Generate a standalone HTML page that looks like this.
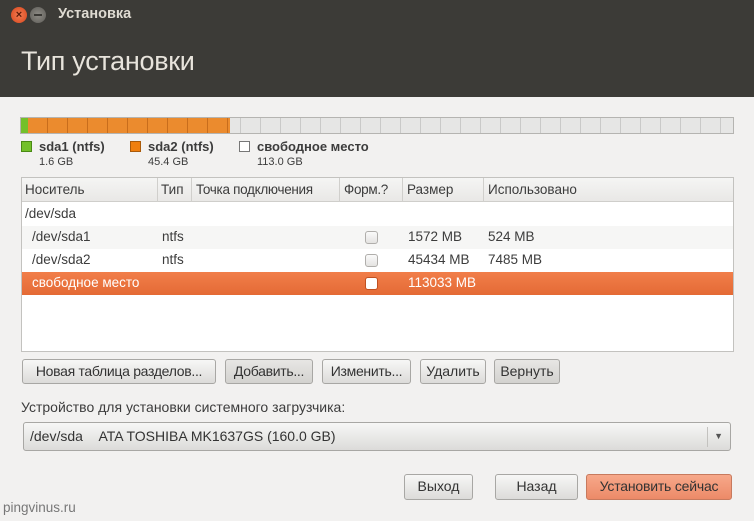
<!DOCTYPE html><html><head><meta charset="utf-8"><style>
*{margin:0;padding:0;box-sizing:border-box}
body{width:754px;height:521px;background:#f2f1f0;font-family:"Liberation Sans","DejaVu Sans",sans-serif;font-size:13.5px;color:#3c3c3c;position:relative;overflow:hidden}
.a{position:absolute;white-space:nowrap}
.hd{left:0;top:0;width:754px;height:97px;background:#3c3b37}
.btn{position:absolute;height:25px;border:1px solid #a8a7a4;border-radius:3px;background:linear-gradient(#f7f7f6,#dcdbd9);text-align:center;line-height:23px;font-size:14px;color:#333}
.c{letter-spacing:0}
.cb{position:absolute;width:13px;height:13px;border:1px solid #b0aeab;border-radius:3px;background:linear-gradient(#fafafa,#e4e3e1);left:365px}
</style></head><body>
<div class="a hd"></div>
<div class="a" style="left:11px;top:7px;width:16px;height:16px;border-radius:50%;background:radial-gradient(#f37c52,#d8461c);color:#5a1a08;font-size:11px;text-align:center;line-height:16px;font-weight:bold">×</div>
<div class="a" style="left:30px;top:7px;width:16px;height:16px;border-radius:50%;background:radial-gradient(#8e8c86,#5e5c57);"><div style="position:absolute;left:4px;top:7px;width:8px;height:2px;background:#3a3935"></div></div>
<div class="a" style="left:58px;top:6px;color:#dfdbd2;font-weight:bold;font-size:14.5px">Установка</div>
<div class="a" style="left:21px;top:46px;color:#e8e4dc;font-size:27px;letter-spacing:-0.3px">Тип установки</div>

<div class="a" style="left:20px;top:117px;width:714px;height:17px;border:1px solid #b5b4b1;background:repeating-linear-gradient(90deg,#e6e6e5 0 19px,#c9c9c8 19px 20px)"></div>
<div class="a" style="left:21px;top:118px;width:7px;height:15px;background:#73c02a"></div>
<div class="a" style="left:28px;top:118px;width:202px;height:15px;background:repeating-linear-gradient(90deg,#eb8b2e 0 19px,#c86d1c 19px 20px)"></div>

<div class="a" style="left:21px;top:141px;width:11px;height:11px;background:#73c02a;border:1px solid #4a8a14"></div>
<div class="a" style="left:39px;top:139px;font-weight:bold;font-size:13px">sda1 (ntfs)</div>
<div class="a" style="left:39px;top:156px;font-size:11px">1.6 GB</div>
<div class="a" style="left:130px;top:141px;width:11px;height:11px;background:#f07f0e;border:1px solid #a95a0a"></div>
<div class="a" style="left:148px;top:139px;font-weight:bold;font-size:13px">sda2 (ntfs)</div>
<div class="a" style="left:148px;top:156px;font-size:11px">45.4 GB</div>
<div class="a" style="left:239px;top:141px;width:11px;height:11px;background:#fff;border:1px solid #777"></div>
<div class="a" style="left:257px;top:139px;font-weight:bold;font-size:13px">свободное место</div>
<div class="a" style="left:257px;top:156px;font-size:11px">113.0 GB</div>

<div class="a" style="left:21px;top:177px;width:713px;height:175px;background:#fff;border:1px solid #c3c2bf"></div>
<div class="a" style="left:22px;top:178px;width:711px;height:24px;background:linear-gradient(#f5f5f4,#e9e8e6);border-bottom:1px solid #cfcecb"></div>
<div class="a" style="left:157px;top:178px;width:1px;height:24px;background:#d0cfcc"></div>
<div class="a" style="left:191px;top:178px;width:1px;height:24px;background:#d0cfcc"></div>
<div class="a" style="left:339px;top:178px;width:1px;height:24px;background:#d0cfcc"></div>
<div class="a" style="left:402px;top:178px;width:1px;height:24px;background:#d0cfcc"></div>
<div class="a" style="left:483px;top:178px;width:1px;height:24px;background:#d0cfcc"></div>
<div class="a c" style="left:25px;top:182px">Носитель</div>
<div class="a c" style="left:161px;top:182px">Тип</div>
<div class="a c" style="left:196px;top:182px;letter-spacing:-0.3px">Точка подключения</div>
<div class="a c" style="left:344px;top:182px;letter-spacing:-0.3px">Форм.?</div>
<div class="a c" style="left:407px;top:182px">Размер</div>
<div class="a c" style="left:488px;top:182px">Использовано</div>
<div class="a c" style="left:25px;top:206px">/dev/sda</div>
<div class="a" style="left:22px;top:226px;width:711px;height:23px;background:#f6f6f5"></div>
<div class="a c" style="left:32px;top:229px">/dev/sda1</div><div class="a c" style="left:162px;top:229px">ntfs</div>
<div class="cb" style="top:231px"></div>
<div class="a c" style="left:408px;top:229px">1572 MB</div><div class="a c" style="left:488px;top:229px">524 MB</div>
<div class="a c" style="left:32px;top:252px">/dev/sda2</div><div class="a c" style="left:162px;top:252px">ntfs</div>
<div class="cb" style="top:254px"></div>
<div class="a c" style="left:408px;top:252px">45434 MB</div><div class="a c" style="left:488px;top:252px">7485 MB</div>
<div class="a" style="left:22px;top:272px;width:711px;height:23px;background:linear-gradient(#f17e4a,#e46a35)"></div>
<div class="a c" style="left:32px;top:275px;color:#fff">свободное место</div>
<div class="cb" style="top:277px;background:#fff;border-color:#c05020"></div>
<div class="a c" style="left:408px;top:275px;color:#fff">113033 MB</div>

<div class="btn" style="left:22px;top:359px;width:194px;letter-spacing:-0.3px">Новая таблица разделов...</div>
<div class="btn" style="left:225px;top:359px;width:88px;background:linear-gradient(#e7e6e4,#d3d2cf);letter-spacing:-0.3px">Добавить...</div>
<div class="btn" style="left:322px;top:359px;width:89px;letter-spacing:-0.3px">Изменить...</div>
<div class="btn" style="left:420px;top:359px;width:66px">Удалить</div>
<div class="btn" style="left:494px;top:359px;width:66px;background:linear-gradient(#e7e6e4,#d3d2cf)">Вернуть</div>

<div class="a c" style="left:21px;top:399px;font-size:14px">Устройство для установки системного загрузчика:</div>
<div class="btn" style="left:23px;top:422px;width:708px;height:29px;text-align:left;line-height:27px;padding-left:6px">/dev/sda&nbsp;&nbsp;&nbsp;&nbsp;ATA TOSHIBA MK1637GS (160.0 GB)
<div style="position:absolute;right:22px;top:4px;width:1px;height:20px;background:#c3c2bf"></div>
<div style="position:absolute;right:7px;top:0;font-size:9px;color:#555">▼</div></div>

<div class="btn" style="left:404px;top:474px;width:69px;height:26px">Выход</div>
<div class="btn" style="left:495px;top:474px;width:83px;height:26px">Назад</div>
<div class="btn" style="left:586px;top:474px;width:146px;height:26px;background:linear-gradient(#f7a88a,#ec8a68);border-color:#c77a5e;letter-spacing:-0.2px">Установить сейчас</div>
<div class="a" style="left:3px;top:500px;font-size:13.5px;color:#777">pingvinus.ru</div>
</body></html>
